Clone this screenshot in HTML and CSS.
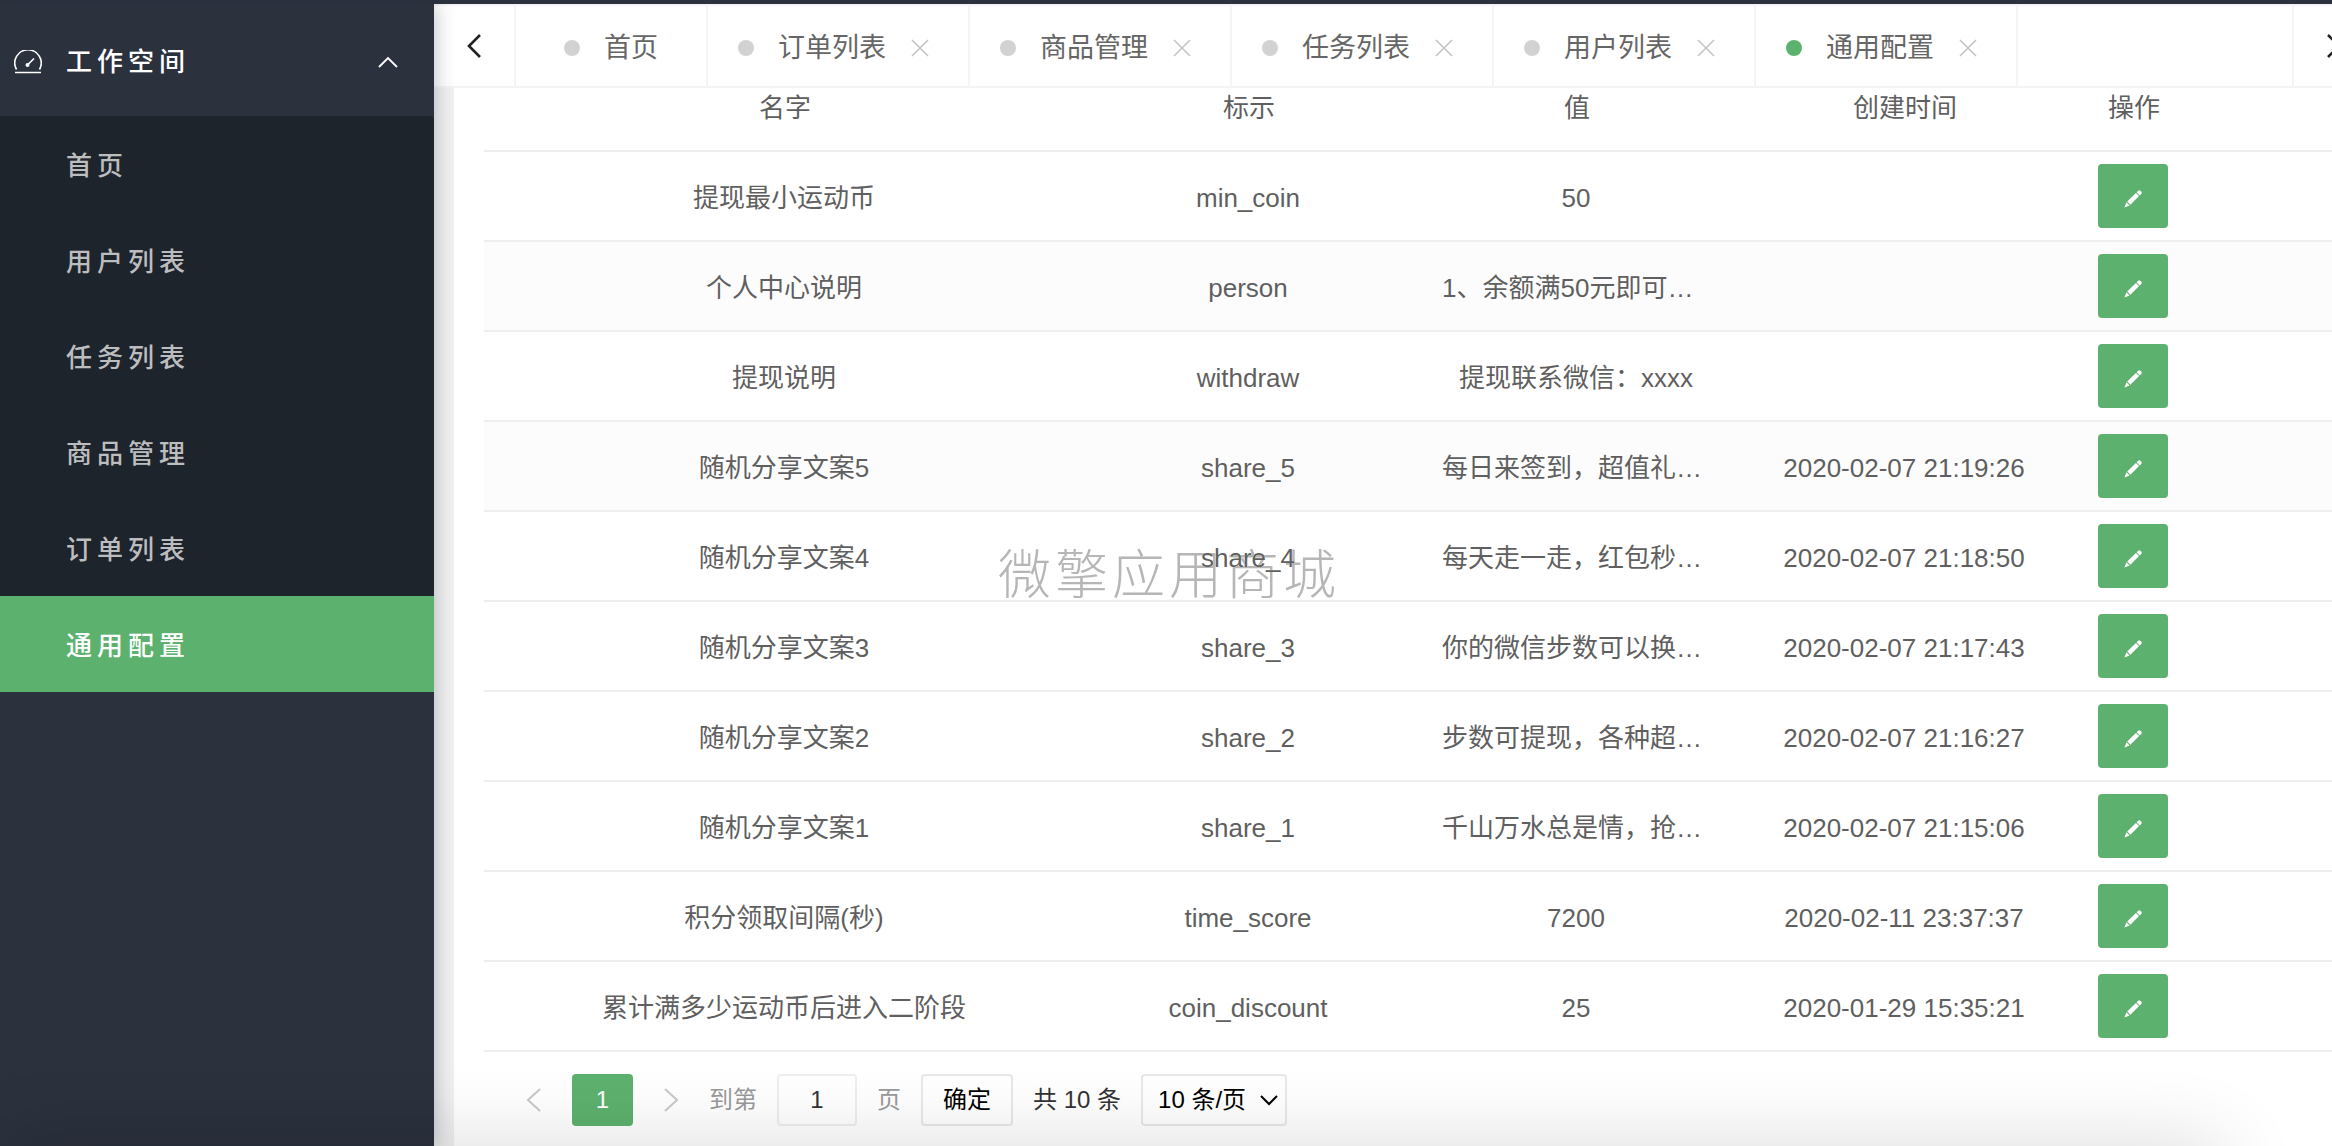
FILE: index.html
```html
<!DOCTYPE html>
<html lang="zh-CN">
<head>
<meta charset="utf-8">
<title>通用配置</title>
<link rel="stylesheet" href="styles.css">
</head>
<body>
<svg class="sprite" aria-hidden="true">
  <symbol id="close" viewBox="0 0 18 18"><path d="M1 1 17 17M17 1 1 17" fill="none" stroke="currentColor" stroke-width="1.5"/></symbol>
  <symbol id="left" viewBox="0 0 16 26"><path d="M14 2 3 13 14 24" fill="none" stroke="currentColor" stroke-width="2.600"/></symbol>
  <symbol id="thin-left" viewBox="0 0 16 26"><path d="M14 2 2 13 14 24" fill="none" stroke="currentColor" stroke-width="2"/></symbol>
  <symbol id="pencil" viewBox="0 0 18 18"><path d="M12.6 2.2 14 .9q1.300-1.100 2.500 0l.7.7q1.100 1.200 0 2.500L15.800 5.400zM11.900 2.900 15.100 6.100 6.400 14.700 3.200 11.500zM2.500 12.300 5.600 15.400.4 17.500z" fill="currentColor"/></symbol>
</svg>
<div class="app">
  <aside class="sidebar">
    <button class="group" type="button" aria-expanded="true">
      <svg class="gauge" viewBox="0 0 28 24"><path d="M2.500 19.500A13.200 13.200 0 1 1 25.500 19.500M1 22.500H27M14 14.500 20 8.500" fill="none" stroke="currentColor" stroke-width="1.600"/><circle cx="13.500" cy="15" r="2" fill="currentColor"/></svg>
      <span>工作空间</span>
      <svg class="chevron" viewBox="0 0 20 12"><path d="M1 11 10 2 19 11" fill="none" stroke="currentColor" stroke-width="1.800"/></svg>
    </button>
    <nav class="menu">
      <a href="#">首页</a>
      <a href="#">用户列表</a>
      <a href="#">任务列表</a>
      <a href="#">商品管理</a>
      <a href="#">订单列表</a>
      <a href="#" class="current">通用配置</a>
    </nav>
  </aside>
  <main class="main">
    <div class="tabs">
      <button class="scroll" type="button" aria-label="向左"><svg><use href="#left"/></svg></button>
      <ul class="tab-list">
        <li class="tab home"><i class="dot"></i><a href="#">首页</a></li>
        <li class="tab"><i class="dot"></i><a href="#">订单列表</a><button type="button" aria-label="关闭"><svg><use href="#close"/></svg></button></li>
        <li class="tab"><i class="dot"></i><a href="#">商品管理</a><button type="button" aria-label="关闭"><svg><use href="#close"/></svg></button></li>
        <li class="tab"><i class="dot"></i><a href="#">任务列表</a><button type="button" aria-label="关闭"><svg><use href="#close"/></svg></button></li>
        <li class="tab"><i class="dot"></i><a href="#">用户列表</a><button type="button" aria-label="关闭"><svg><use href="#close"/></svg></button></li>
        <li class="tab active"><i class="dot"></i><a href="#">通用配置</a><button type="button" aria-label="关闭"><svg><use href="#close"/></svg></button></li>
      </ul>
      <button class="scroll next" type="button" aria-label="向右"><svg><use href="#left"/></svg></button>
    </div>
    <section class="card">
      <table class="grid">
        <colgroup><col class="c-name"><col class="c-mid"><col class="c-mid"><col class="c-mid"><col class="c-act"><col></colgroup>
        <thead><tr><th>名字</th><th>标示</th><th>值</th><th>创建时间</th><th>操作</th><th></th></tr></thead>
        <tbody>
          <tr><td>提现最小运动币</td><td>min_coin</td><td>50</td><td></td><td class="act"><button class="edit" type="button" aria-label="编辑"><svg><use href="#pencil"/></svg></button></td><td></td></tr>
          <tr class="tint"><td>个人中心说明</td><td>person</td><td class="clip">1、余额满50元即可…</td><td></td><td class="act"><button class="edit" type="button" aria-label="编辑"><svg><use href="#pencil"/></svg></button></td><td></td></tr>
          <tr><td>提现说明</td><td>withdraw</td><td>提现联系微信：xxxx</td><td></td><td class="act"><button class="edit" type="button" aria-label="编辑"><svg><use href="#pencil"/></svg></button></td><td></td></tr>
          <tr class="tint"><td>随机分享文案5</td><td>share_5</td><td class="clip">每日来签到，超值礼…</td><td>2020-02-07 21:19:26</td><td class="act"><button class="edit" type="button" aria-label="编辑"><svg><use href="#pencil"/></svg></button></td><td></td></tr>
          <tr><td>随机分享文案4</td><td>share_4</td><td class="clip">每天走一走，红包秒…</td><td>2020-02-07 21:18:50</td><td class="act"><button class="edit" type="button" aria-label="编辑"><svg><use href="#pencil"/></svg></button></td><td></td></tr>
          <tr><td>随机分享文案3</td><td>share_3</td><td class="clip">你的微信步数可以换…</td><td>2020-02-07 21:17:43</td><td class="act"><button class="edit" type="button" aria-label="编辑"><svg><use href="#pencil"/></svg></button></td><td></td></tr>
          <tr><td>随机分享文案2</td><td>share_2</td><td class="clip">步数可提现，各种超…</td><td>2020-02-07 21:16:27</td><td class="act"><button class="edit" type="button" aria-label="编辑"><svg><use href="#pencil"/></svg></button></td><td></td></tr>
          <tr><td>随机分享文案1</td><td>share_1</td><td class="clip">千山万水总是情，抢…</td><td>2020-02-07 21:15:06</td><td class="act"><button class="edit" type="button" aria-label="编辑"><svg><use href="#pencil"/></svg></button></td><td></td></tr>
          <tr><td>积分领取间隔(秒)</td><td>time_score</td><td>7200</td><td>2020-02-11 23:37:37</td><td class="act"><button class="edit" type="button" aria-label="编辑"><svg><use href="#pencil"/></svg></button></td><td></td></tr>
          <tr><td>累计满多少运动币后进入二阶段</td><td>coin_discount</td><td>25</td><td>2020-01-29 15:35:21</td><td class="act"><button class="edit" type="button" aria-label="编辑"><svg><use href="#pencil"/></svg></button></td><td></td></tr>
        </tbody>
      </table>
      <div class="pager">
        <button class="arrow" type="button" aria-label="上一页"><svg><use href="#thin-left"/></svg></button>
        <button class="page" type="button">1</button>
        <button class="arrow flip" type="button" aria-label="下一页"><svg><use href="#thin-left"/></svg></button>
        <label class="muted" for="goto">到第</label>
        <input id="goto" type="text" value="1">
        <span class="muted">页</span>
        <button class="ok" type="button">确定</button>
        <span class="total">共 10 条</span>
        <span class="size">
          <select aria-label="每页条数"><option>10 条/页</option><option>20 条/页</option></select>
          <svg viewBox="0 0 20 12"><path d="M2 2 10 10 18 2" fill="none" stroke="currentColor" stroke-width="2"/></svg>
        </span>
      </div>
    </section>
  </main>
</div>
<div class="watermark">微擎应用商城</div>
<div class="shade"></div>
</body>
</html>
```
FILE: styles.css
```css
* { box-sizing: border-box; }
html, body { height: 100%; }
body {
  margin: 0;
  overflow: hidden;
  background: #f1f1f1;
  color: #5f5f5f;
  font: 26px/40px "Liberation Sans", "Noto Sans CJK SC", sans-serif;
}
button, input, select { font: inherit; color: inherit; margin: 0; padding: 0; border: 0; background: none; }
a { color: inherit; text-decoration: none; }
svg { display: block; }
.sprite { position: absolute; width: 0; height: 0; }

.app { display: flex; height: 100%; border-top: 4px solid #2b323e; }

.sidebar {
  position: relative;
  z-index: 2;
  flex: 0 0 434px;
  background: #2b313d;
  box-shadow: 0 0 20px rgba(30, 36, 60, .3);
  font-weight: 500;
  letter-spacing: 5px;
}
.group {
  display: flex;
  align-items: center;
  width: 100%;
  height: 112px;
  padding: 3px 36px 0 14px;
  color: #fff;
  letter-spacing: inherit;
}
.gauge { width: 28px; height: 24px; margin-right: 24px; }
.chevron { width: 20px; height: 12px; margin-left: auto; }
.menu { background: #1e242b; border-radius: 0 4px 0 0; }
.menu a { display: block; padding: 4px 0 0 66px; line-height: 92px; color: #bbbdbf; }
.menu .current { background: #5db16e; color: #fff; }

.main { flex: 1; min-width: 0; display: flex; flex-direction: column; }
.tabs {
  position: relative;
  z-index: 1;
  display: flex;
  flex: 0 0 84px;
  background: #fff;
  border: solid #f4f4f4;
  border-width: 2px 0;
  font-size: 27px;
}
.scroll { flex: 0 0 82px; display: flex; align-items: center; justify-content: center; border-right: 2px solid #f4f4f4; color: #222; }
.scroll svg { width: 16px; height: 26px; }
.next { margin-right: -42px; border-right: 0; border-left: 2px solid #f4f4f4; }
.next svg { transform: scaleX(-1); }
.tab-list { flex: 1; display: flex; min-width: 0; margin: 0; padding: 0; list-style: none; }
.tab { flex: none; display: flex; align-items: center; width: 262px; padding: 4px 0 0 30px; border-right: 2px solid #f4f4f4; color: #666; }
.tab.home { width: 192px; padding-left: 48px; }
.dot { width: 16px; height: 16px; margin-right: 24px; border-radius: 50%; background: #d2d2d2; }
.active .dot { background: #5db16e; }
.tab button { margin-left: 25px; color: #c2c2c2; }
.tab button svg { width: 18px; height: 18px; }

.card { flex: 1; margin-left: 20px; padding-left: 30px; background: #fff; }
.grid { width: 100%; margin-top: -27px; border-collapse: collapse; table-layout: fixed; }
.c-name { width: 600px; }
.c-mid { width: 328px; }
.c-act { width: 130px; }
.grid tr { height: 90px; border-bottom: 2px solid #eee; }
.grid th, .grid td { padding: 4px 0 0; text-align: center; font-weight: 400; white-space: nowrap; }
.grid th { padding-left: 2px; }
.grid td.act { padding: 0; }
.grid td.clip { padding-left: 30px; text-align: left; }
.grid .tint { background: #fcfcfc; }
.edit { display: flex; align-items: center; justify-content: center; width: 70px; height: 64px; margin: 0 auto; border-radius: 4px; background: #5db16e; color: #fff; }
.grid .edit { padding-top: 6px; }
.edit svg { width: 18px; height: 18px; }

.pager { display: flex; align-items: center; gap: 20px; height: 52px; margin: 22px 0 0 42px; font-size: 24px; color: #333; }
.arrow { color: #c8c8c8; }
.arrow svg { width: 16px; height: 26px; }
.flip svg { transform: scaleX(-1); }
.pager .page { width: 61px; height: 52px; margin: 0 10px; border-radius: 4px; background: #5db16e; color: #fff; }
.muted { color: #999; }
.flip + .muted { margin-left: 10px; }
.pager input { width: 80px; height: 52px; border: 2px solid #eee; border-radius: 4px; text-align: center; }
.pager .ok { width: 92px; height: 52px; border: 2px solid #e8e8e8; border-radius: 4px; color: #000; }
.size { display: flex; align-items: center; }
.size select { appearance: none; width: 146px; height: 52px; padding-left: 15px; border: 2px solid #e8e8e8; border-radius: 4px; color: #000; }
.size svg { width: 20px; height: 12px; margin-left: -28px; color: #000; pointer-events: none; }

.watermark {
  position: fixed;
  inset: 0;
  z-index: 3;
  display: flex;
  align-items: center;
  justify-content: center;
  padding: 5px 0 0 6px;
  font-size: 53px;
  font-weight: 300;
  letter-spacing: 4px;
  color: #b6b6b6;
  mix-blend-mode: darken;
  pointer-events: none;
}
.shade {
  position: fixed;
  left: 0;
  right: 110px;
  top: 100%;
  z-index: 4;
  height: 60px;
  box-shadow: 0 0 80px rgba(0, 0, 0, .16);
  pointer-events: none;
}
```
